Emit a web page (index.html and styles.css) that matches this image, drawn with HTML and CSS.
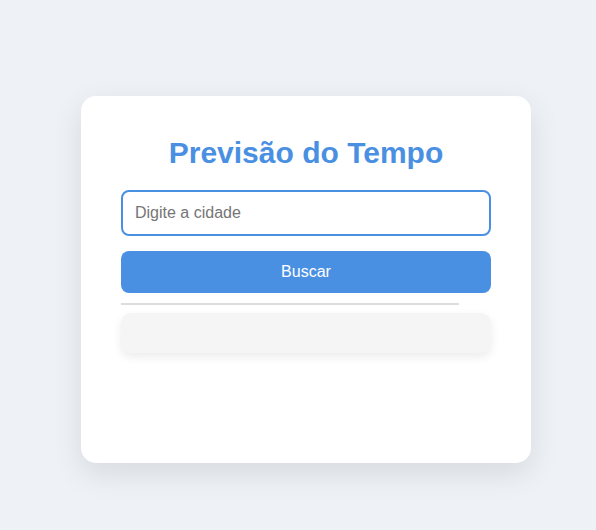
FILE: index.html
```html
<!DOCTYPE html>
<html lang="pt-BR">
<head>
<meta charset="utf-8">
<title>Previsão do Tempo</title>
<link rel="stylesheet" href="styles.css">
</head>
<body>
  <main class="card">
    <h1 class="title">Previsão do Tempo</h1>
    <input class="city-input" type="text" placeholder="Digite a cidade">
    <button class="search-btn" type="button">Buscar</button>
    <div class="divider"></div>
    <div class="result"></div>
  </main>
</body>
</html>
```
FILE: styles.css
```css
* { box-sizing: border-box; }
html, body { margin: 0; }
body {
  background: #eef2f7;
  font-family: "Liberation Sans", Arial, sans-serif;
  display: flex;
  justify-content: center;
  align-items: flex-start;
  padding: 96px 0 0 16px;
  min-height: 530px;
}
.card {
  width: 450px;
  min-height: 367px;
  background: #fff;
  border-radius: 15px;
  padding: 40px;
  box-shadow: 0 10px 30px rgba(0, 0, 0, 0.1);
  display: flex;
  flex-direction: column;
}
.title {
  margin: 0 0 20px;
  text-align: center;
  color: #4a90e2;
  font-size: 30px;
  font-weight: bold;
  line-height: 34px;
}
.city-input {
  width: 100%;
  height: 46px;
  padding: 0 12px;
  border: 2px solid #4a90e2;
  border-radius: 8px;
  font-family: inherit;
  font-size: 16px;
  outline: none;
}
.city-input::placeholder { color: #757575; }
.search-btn {
  margin-top: 15px;
  width: 100%;
  height: 42px;
  border: none;
  border-radius: 8px;
  background: #4a90e2;
  color: #fff;
  font-family: inherit;
  font-size: 16px;
}
.divider {
  margin-top: 10px;
  width: 338px;
  height: 2px;
  background: #dddddd;
}
.result {
  margin-top: 8px;
  height: 40px;
  background: #f5f5f5;
  border-radius: 10px;
  box-shadow: 0 4px 10px rgba(0, 0, 0, 0.08);
}
```
